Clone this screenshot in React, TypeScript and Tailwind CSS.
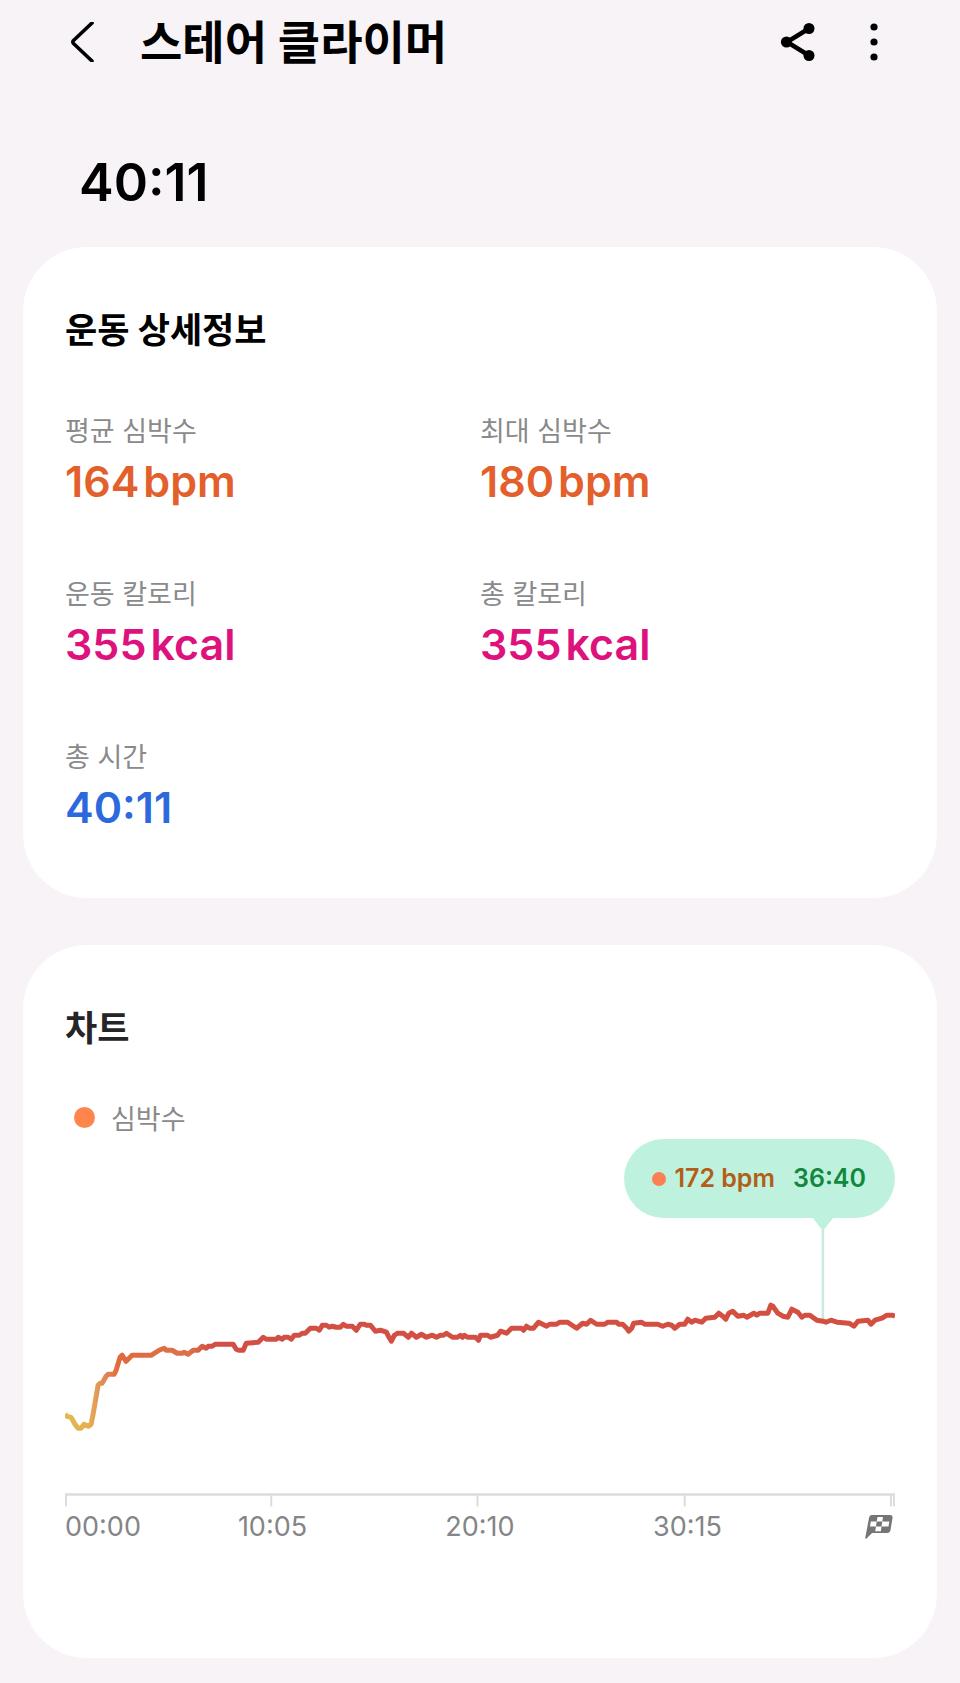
import { ReactNode } from 'react'

interface Stat {
  label: string
  value: string
  unit?: string
  color: string
}

const stats: Stat[] = [
  { label: '평균 심박수', value: '164', unit: 'bpm', color: 'text-[#e3602d]' },
  { label: '최대 심박수', value: '180', unit: 'bpm', color: 'text-[#e3602d]' },
  { label: '운동 칼로리', value: '355', unit: 'kcal', color: 'text-[#dd127c]' },
  { label: '총 칼로리', value: '355', unit: 'kcal', color: 'text-[#dd127c]' },
  { label: '총 시간', value: '40:11', color: 'text-[#2b69dc]' },
]

const ticks = [1, 206, 412, 619, 825, 828]

const heartRate =
  '0,275 2,277 6,278 10,285 13,289 16,289 19,285 23,287 26,285 28,275 33,246 35,244 37,244 41,237 43,235 49,235 51,231 55,218 57,216 61,222 65,218 67,216 86,216 94,211 99,209 101,211 107,211 112,214 117,214 119,213 123,215 128,211 133,211 137,207 141,209 143,207 147,207 150,205 168,205 171,210 174,211 178,211 181,204 193,203 198,198 201,200 211,200 213,198 217,200 219,198 223,198 226,200 229,196 234,196 237,194 240,194 245,189 251,189 254,191 257,186 261,186 264,188 267,187 271,188 275,188 278,185 281,187 287,187 291,191 295,185 299,185 301,186 305,186 310,192 315,191 321,193 323,197 326,202 329,196 332,194 338,194 343,198 346,194 351,198 356,195 361,198 367,196 371,198 375,196 378,196 381,194 387,198 392,198 395,196 397,198 399,196 402,198 410,198 413,201 415,196 422,196 425,198 432,196 435,192 441,194 446,189 456,189 458,191 461,187 464,189 468,189 473,183 481,187 484,185 491,185 494,183 502,183 511,189 517,184 521,185 525,181 531,185 539,185 542,183 551,183 553,185 557,185 561,189 563,192 566,189 568,184 576,183 579,185 592,185 597,187 602,185 606,186 609,189 614,185 619,185 622,180 626,183 629,181 636,183 640,179 649,178 653,174 657,177 660,180 663,174 667,172 672,177 678,176 681,178 688,174 691,176 694,174 702,174 705,166 707,167 712,174 717,177 722,178 726,170 732,173 736,178 739,176 744,176 751,181 757,182 760,183 765,181 771,183 783,184 788,187 792,182 802,181 805,185 809,181 816,179 821,176 826,176 829,177'

function Card({ title, titleColor, children }: { title: string; titleColor: string; children: ReactNode }) {
  return (
    <section className="rounded-[64px] bg-white px-[42px] pt-[59px]">
      <h2 className={`text-[35px] leading-[48px] font-bold ${titleColor}`}>{title}</h2>
      {children}
    </section>
  )
}

function Header() {
  return (
    <header className="flex h-[84px] items-center pr-[71px] pl-[62px]">
      <button type="button" aria-label="뒤로" className="flex size-10 items-center justify-center">
        <svg viewBox="0 0 40 40" className="size-10" fill="none" stroke="#000" strokeWidth="3.6" strokeLinecap="round" strokeLinejoin="round">
          <path d="M30 1 11.5 18.5Q10.2 20 11.5 21.5L30 39" />
        </svg>
      </button>
      <h1 className="ml-[38px] flex-1 text-[46px] leading-[64px] font-bold text-black">스테어 클라이머</h1>
      <button type="button" aria-label="공유" className="mr-[41px] flex size-10 items-center justify-center">
        <svg viewBox="0 0 40 40" className="size-10" fill="#000">
          <path d="M31 6.500 9 20 31 33.500" fill="none" stroke="#000" strokeWidth="4.500" />
          <circle cx="31" cy="6.500" r="5.500" />
          <circle cx="8.500" cy="20" r="5.600" />
          <circle cx="31" cy="33.500" r="5.500" />
        </svg>
      </button>
      <button type="button" aria-label="더보기" className="flex h-10 w-[30px] items-center justify-center">
        <svg viewBox="0 0 30 40" className="h-10 w-[30px]" fill="#000">
          <circle cx="15" cy="5" r="3.600" />
          <circle cx="15" cy="20" r="3.600" />
          <circle cx="15" cy="35" r="3.600" />
        </svg>
      </button>
    </header>
  )
}

function FlagIcon() {
  return (
    <svg viewBox="0 0 28 24" className="h-6 w-7" role="img" aria-label="종료">
      <path
        d="M7 0H25Q28 0 27.500 3L25.500 15Q25 18 22 18H7L1.500 23.500Q0 24 .3 22.500L4 3Q4.500 0 7 0Z"
        fill="#757575"
      />
      <path
        d="M12.500 2H18L17.300 6.500H11.700ZM5.800 6.500H11.700L11 11.500H5ZM17.300 6.500H24.300L23.500 11.500H16.500ZM11 11.500H16.500L15.900 16.300H10.200Z"
        fill="#fff"
      />
    </svg>
  )
}

function HeartRateChart() {
  return (
    <div className="relative">
      <svg viewBox="0 0 829 368" className="block w-full" role="img" aria-label="심박수 차트">
        <defs>
          <linearGradient id="zone" gradientUnits="userSpaceOnUse" x1="0" y1="0" x2="829" y2="0">
            <stop offset="0" stopColor="#e3b94f" />
            <stop offset="0.03" stopColor="#e5ad52" />
            <stop offset="0.042" stopColor="#e0925a" />
            <stop offset="0.065" stopColor="#e06a3e" />
            <stop offset="0.15" stopColor="#dd7049" />
            <stop offset="0.175" stopColor="#d24f45" />
            <stop offset="1" stopColor="#d44f40" />
          </linearGradient>
        </defs>
        <path d="M746 78H768L758.500 90Q757 92 755.500 90Z" fill="#bff2de" />
        <path d="M757 90V181" stroke="#c8ebdd" strokeWidth="2.500" />
        <polyline points={heartRate} fill="none" stroke="url(#zone)" strokeWidth="5" strokeLinejoin="round" />
        <path d="M0 355H829" stroke="#dcdcde" strokeWidth="2.500" />
        {ticks.map((x) => (
          <path key={x} d={`M${x} 355V367`} stroke="#dcdcde" strokeWidth="2" />
        ))}
      </svg>

      <div className="absolute top-0 right-0 flex h-[79px] items-center rounded-full bg-[#bff2de] pr-[29px] pl-[28px] text-[25px] font-semibold">
        <span className="mr-2 size-[14px] rounded-full bg-[#fb8054]" />
        <span className="text-[#b25e17]">172 bpm</span>
        <span className="ml-[18px] text-[#12883f]">36:40</span>
      </div>
    </div>
  )
}

export default function App() {
  return (
    <div className="min-h-screen bg-[#f7f3f7] pb-[25px] font-['Inter','Noto_Sans_CJK_KR',sans-serif]">
      <Header />

      <main className="px-[23px]">
        <p className="mt-[67px] mb-8 pl-[56px] text-[52px] leading-[64px] font-semibold text-black">40:11</p>

        <Card title="운동 상세정보" titleColor="text-black">
          <dl className="mt-[58px] grid grid-cols-2 gap-y-[65px] pb-[62px]">
            {stats.map((stat) => (
              <div key={stat.label}>
                <dt className="text-[27px] leading-[40px] text-[#8a8a8c]">{stat.label}</dt>
                <dd className={`flex gap-1 text-[43px] leading-[58px] font-semibold ${stat.color}`}>
                  <span>{stat.value}</span>
                  {stat.unit && <span>{stat.unit}</span>}
                </dd>
              </div>
            ))}
          </dl>
        </Card>

        <div className="mt-[47px]">
          <Card title="차트" titleColor="text-[#252528]">
            <div className="mt-[43px] flex items-center pl-[9px]">
              <span className="mr-4 size-[21px] rounded-full bg-[#ff854c]" />
              <span className="pt-[6px] text-[27px] leading-[38px] text-[#8a8a8c]">심박수</span>
            </div>

            <HeartRateChart />

            <div className="grid grid-cols-8 items-center pb-[111px] text-[27px] leading-[40px] text-[#858587]">
              <span>00:00</span>
              <span className="col-span-2 text-center">10:05</span>
              <span className="col-span-2 text-center">20:10</span>
              <span className="col-span-2 text-center">30:15</span>
              <span className="flex justify-end pr-[2px]">
                <FlagIcon />
              </span>
            </div>
          </Card>
        </div>
      </main>
    </div>
  )
}
